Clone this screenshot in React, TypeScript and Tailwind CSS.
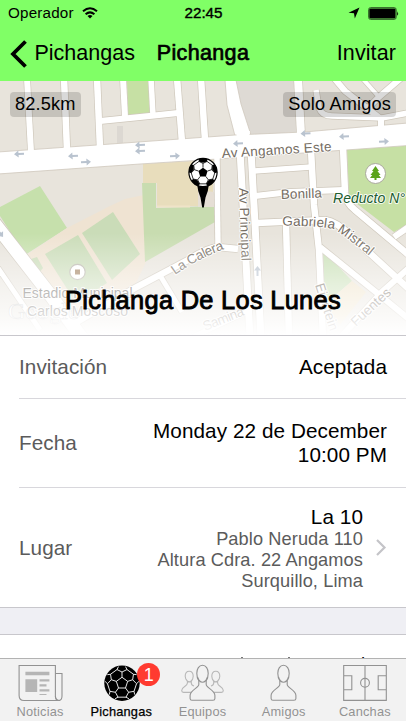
import React from "react";

const point = (r: number, deg: number): [number, number] => {
  const a = (deg * Math.PI) / 180;
  return [r * Math.cos(a), r * Math.sin(a)];
};
const path = (pts: [number, number][], close = false) =>
  pts.map((p, i) => `${i ? "L" : "M"}${p[0].toFixed(2)} ${p[1].toFixed(2)}`).join("") + (close ? "Z" : "");

function ballSeams(r: number, start: number) {
  let seams = "";
  const patches: string[] = [];
  const centre: [number, number][] = [];
  for (let k = 0; k < 5; k++) {
    const t = start + k * 72;
    centre.push(point(r * 0.34, t));
    seams += path([point(r * 0.34, t), point(r * 0.64, t)]);
    seams += path([point(r * 0.97, t - 12), point(r * 0.83, t - 20), point(r * 0.64, t), point(r * 0.83, t + 20), point(r * 0.97, t + 12)]);
    seams += path([point(r * 0.83, t + 20), point(r * 0.83, t + 52)]);
    patches.push(path([point(r, t - 18), point(r * 0.83, t - 20), point(r * 0.68, t), point(r * 0.83, t + 20), point(r, t + 18), point(r * 1.02, t)], true));
  }
  return { seams, patches, centre: path(centre, true) };
}

const tabBall = ballSeams(17.5, -90);
const pinBall = ballSeams(14.2, -90);

const streets: { d: string; w: number }[] = [
  { d: "M27 78L31 152", w: 6 },
  { d: "M64 78L67 150", w: 6.5 },
  { d: "M97 78L100 148", w: 6.5 },
  { d: "M123 78L125 117", w: 6 },
  { d: "M100 121L140 117L178 113", w: 6 },
  { d: "M151 78L153 115", w: 5.5 },
  { d: "M177 78L182 142", w: 6.5 },
  { d: "M201 78L205 140", w: 6.5 },
  { d: "M298 78L301 135", w: 8 },
  { d: "M316 90L319 108Q322 116 332 116L382 118L408 113", w: 5.5 },
  { d: "M334 78L345 91L381 119V132", w: 6 },
  { d: "M401 78L379 97L366 110", w: 6 },
  { d: "M379 97L362 78", w: 4 },
  { d: "M240 150L243 205L250 338", w: 7 },
  { d: "M251 150L254 205L261 338", w: 7 },
  { d: "M254 171L311 167", w: 5.5 },
  { d: "M255 196L290 192L343 190", w: 6 },
  { d: "M257 223L325 220Q337 222 350 235L410 290", w: 6.5 },
  { d: "M311 150L314 205L319 250L323 338", w: 6.5 },
  { d: "M286 222L289 338", w: 6.5 },
  { d: "M343 147L345 193Q346 203 355 210L410 256", w: 6.5 },
  { d: "M394 237L410 226", w: 6 },
  { d: "M320 247L382 297L410 320", w: 6 },
  { d: "M410 267L382 292L340 338", w: 6 },
  { d: "M217 158L218 246", w: 5.5 },
  { d: "M238 249L218 247Q207 248 188 260L135 288L75 323", w: 6.5 },
  { d: "M161 277L182 312", w: 5 },
  { d: "M195 336L248 311", w: 5 },
  { d: "M-4 265L40 330", w: 5 },
  { d: "M-8 220L48 292L82 338", w: 13 },
];

const arrows = [
  [19, 154, 176], [73, 156, 176], [86, 162, -4], [140, 145, 176], [140, 151, 176],
  [175, 156, -4], [238, 143.5, 176], [305.5, 133.5, 176], [344, 136.5, 176], [384, 141.5, -4],
  [257.5, 271, -90], [0, 233, 52],
];

function MapBackdrop() {
  return (
    <svg className="block h-[254px] w-full" viewBox="0 81 406 254" preserveAspectRatio="none" fontFamily="'Liberation Sans', Arial, sans-serif">
      <defs>
        <linearGradient id="fade" x1="0" y1="0" x2="0" y2="1">
          <stop offset="0" stopColor="#fff" stopOpacity="0" />
          <stop offset="0.5" stopColor="#fff" stopOpacity="0.52" />
          <stop offset="0.8" stopColor="#fff" stopOpacity="0.78" />
          <stop offset="1" stopColor="#fff" stopOpacity="1" />
        </linearGradient>
        <path id="mistral" d="M282 225.5Q322 226 333 229Q342 233 378 263" />
        <path id="calera" d="M175 275Q197 259 227 248" />
      </defs>
      <rect y="81" width="406" height="254" fill="#e8e4dc" />
      <path d="M234 81H296L299 132L250 136Z" fill="#dedad4" />
      <path d="M127 81H149L150 113L128 116Z" fill="#c6e0a4" />
      <path d="M117 126H123V143H117Z" fill="#dcd8d2" />
      <path d="M0 207L40 186L67 228L25 255L0 216Z" fill="#c6e0ac" />
      <path d="M25 256L67 228L110 206L125 199L144 195L146 262L135 285L80 318L55 295Z" fill="#efe3d2" />
      <path d="M45 254L78 235L107 283L76 303Z" fill="#cadcb8" />
      <path d="M82 233L113 212L140 254L112 280Z" fill="#cadcb8" />
      <path d="M28 260L37 257L43 268L38 274Z" fill="#cadcb8" />
      <path d="M143 164L213 160V206H157V183H143Z" fill="#e8ddbc" />
      <path d="M142 183H156V208L214 206L215 222L145 262Z" fill="#c8dcb0" />
      <path d="M157 206.5H190" stroke="#efe3c8" strokeWidth="2" />
      <path d="M198 190L214 192V207H198Z" fill="#e5ded5" />
      <path d="M347 149L406 145V225L394 232L356 203L349 195Z" fill="#c6e0a4" />
      <path d="M323 250L352 281L325 304Z" fill="#c9e0b6" />
      <path d="M352 281L366 292L340 325L326 304Z" fill="#efe3c8" />
      <g fill="none" stroke="#cfc8bc">
        {streets.map((s, i) => <path key={i} d={s.d} strokeWidth={s.w + 1.4} />)}
      </g>
      <path d="M225 80L227 105L235 136L251 135L241 104L236 80Z" fill="#fff" stroke="#cfc8bc" strokeWidth="0.8" />
      <path d="M-2 152L97 145L235 135L304 132L408 123V145.5L346 150L218 159L140 164L-2 174Z" fill="#fff" stroke="#cfc8bc" strokeWidth="0.8" />
      <g fill="none" stroke="#fff">
        {streets.map((s, i) => <path key={i} d={s.d} strokeWidth={s.w} />)}
      </g>
      <path d="M236 132L250 131L249 138H237Z" fill="#fff" />
      {arrows.map(([x, y, r], i) => (
        <path key={i} transform={`translate(${x} ${y}) rotate(${r})`} d="M-5 -1H0.5V-3.5L5 0L0.5 3.5V1H-5Z" fill="#b9c3cf" />
      ))}
      <text x="8" y="319" fontSize="24" fontFamily="'Liberation Serif', serif" fill="#fff" stroke="#b5b5b5" strokeWidth="0.6">Google</text>
      <g fill="#756d63" stroke="#fff" strokeOpacity="0.85" strokeWidth="2" strokeLinejoin="round" fontSize="13.5" style={{ paintOrder: "stroke" }}>
        <text transform="translate(222 158) rotate(-3.6)" textLength="110">Av Angamos Este</text>
        <text transform="translate(281 199) rotate(-2)" textLength="41">Bonilla</text>
        <text transform="translate(239 188) rotate(88)" textLength="73">Av Principal</text>
        <text><textPath href="#mistral" textLength="97">Gabriela Mistral</textPath></text>
        <text><textPath href="#calera" textLength="56">La Calera</textPath></text>
        <text transform="translate(205 331) rotate(-22)" textLength="43">Samina</text>
        <text transform="translate(315 285) rotate(72)" textLength="49">Einstein</text>
        <text transform="translate(356 327) rotate(-43)" textLength="49">Fuentes</text>
        <text x="22.5" y="298" textLength="110" fontSize="14" fill="#5f5b57">Estadio Municipal</text>
        <text x="27" y="316" textLength="101" fontSize="14" fill="#5f5b57">Carlos Moscoso</text>
        <text x="333" y="202.5" textLength="72" fontSize="14" fill="#205c30" fontStyle="italic">Reducto N°</text>
      </g>
      <circle cx="375.5" cy="173.5" r="10" fill="#fff" stroke="#aaa89e" strokeWidth="1" />
      <path d="M375.5 166L379 171H377.5L380.5 175H378.7L381 178H376.5V180H374.5V178H370L372.3 175H370.5L373.5 171H372Z" fill="#5ba31b" />
      <circle cx="77.5" cy="272" r="7.7" fill="#fff" stroke="#b8b4ab" strokeWidth="1.2" />
      <rect x="75" y="269.5" width="5" height="5" fill="#a1805f" />
      <rect y="233" width="406" height="102" fill="url(#fade)" />
      <g transform="translate(203 172.5)">
        <path d="M-6 11H6Q5.500 18 2.500 25L0.800 35H-0.800L-2.500 25Q-5.500 18 -6 11Z" fill="#000" />
        <circle r="14.2" fill="#fff" />
        {pinBall.patches.map((d, i) => <path key={i} d={d} fill="#000" />)}
        <path d={pinBall.centre} fill="#000" />
        <path d={pinBall.seams} fill="none" stroke="#000" strokeWidth="0.8" />
        <circle r="14.1" fill="none" stroke="#000" strokeWidth="1.2" />
      </g>
    </svg>
  );
}

function Row({ label, className, children }: { label: string; className: string; children: React.ReactNode }) {
  return (
    <div className={`ml-[19px] flex items-center justify-between text-[20.7px] leading-6 tracking-[0.08px] ${className}`}>
      <span className="text-[#5b5b5b]">{label}</span>
      {children}
    </div>
  );
}

function NewsIcon() {
  return (
    <>
      <path d="M2.100 1.500H38.400V32Q38.400 36.500 43 36.500H7Q2.100 36.500 2.100 31.500Z" />
      <path d="M38.400 9.500H45V32Q45 36.500 41.500 36.500Q38.400 36.500 38.400 32" />
      <g fill="#b5b5b5" stroke="none">
        <path d="M8.400 7.700H32.400V11.300H8.400ZM8.400 15.300H20.200V28H8.400ZM22.500 15.300H32.400V17.600H22.500ZM22.500 20.200H29.500V22.400H22.500ZM22.500 25.300H32.400V27.500H22.500ZM22.500 30H29.500V31H22.500Z" />
      </g>
    </>
  );
}

const person = "M23.500 1.300C27 1.300 29.200 4.800 29.200 9.300C29.200 12.500 28.500 14.800 27.200 16.700V20.500C27.200 24 35.900 25.800 35.900 31.500V34.500Q35.900 36.300 34 36.300H13Q11.100 36.300 11.100 34.500V31.500C11.100 25.800 19.800 24 19.800 20.500V16.700C18.500 14.800 17.800 12.500 17.800 9.300C17.800 4.800 20 1.300 23.500 1.300Z";
const chin = "M18.500 13C19.400 16 21.200 18.200 23.500 18.200C25.800 18.200 27.600 16 28.500 13";

function TeamIcon() {
  const side = "M12.500 28.400H4.500Q2.700 28.400 2.700 26.500C2.700 22.500 8.400 22.500 8.400 19V17.300C7 15.800 6.200 14 6.200 12.300C6.200 9.300 7.800 7.200 10.200 7.200C12.600 7.200 14.200 9.300 14.200 12.300C14.200 14 13.400 15.800 12.300 17.300V19C12.300 20.500 13.500 21.500 15 22";
  const sideChin = "M7 15.200Q10.200 20.500 13.500 15.200";
  return (
    <>
      <g stroke="#b8b8b8">
        <path d={side + sideChin} />
        <path d={side + sideChin} transform="translate(47 0) scale(-1 1)" />
      </g>
      <path d={person} fill="#f2f2f2" />
      <path d={chin} />
    </>
  );
}

function FriendIcon() {
  return <path d={person + chin} />;
}

function FieldIcon() {
  return (
    <>
      <path d="M2.700 1.500H45.300V36.400H2.700ZM24 1.500V36.400M2.700 11.700H10.800V25.700H2.700M45.300 11.700H37.200V25.700H45.300" />
      <circle cx="24" cy="18.800" r="4.400" />
    </>
  );
}

function BallIcon() {
  return (
    <g transform="translate(24 19.2)">
      <circle r="17.7" fill="#000" stroke="none" />
      <path d={tabBall.seams + tabBall.centre} stroke="#fff" strokeWidth="0.9" />
    </g>
  );
}

const tabs = [
  { label: "Noticias", icon: <NewsIcon /> },
  { label: "Pichangas", icon: <BallIcon />, badge: 1 },
  { label: "Equipos", icon: <TeamIcon /> },
  { label: "Amigos", icon: <FriendIcon /> },
  { label: "Canchas", icon: <FieldIcon /> },
];

export default function App() {
  return (
    <div className="flex h-[721px] w-[406px] flex-col overflow-hidden bg-white font-['Liberation_Sans',Arial,sans-serif] text-black">
      <header className="h-[81px] shrink-0 bg-[#80ff66]">
        <div className="grid h-[26px] grid-cols-3 items-center pr-[7px] pl-2 text-[15.2px] leading-none">
          <div className="flex items-center gap-2">
            <span className="tracking-[0.2px]">Operador</span>
            <svg width="16" height="12" viewBox="0 0 16 12" fill="none" stroke="#000" strokeWidth="2">
              <path d="M1 4.300Q8 -1.900 15 4.300M3.600 7.300Q8 3.500 12.400 7.300" />
              <path d="M8 11.500L5.500 9Q8 7 10.500 9Z" fill="#000" stroke="none" />
            </svg>
          </div>
          <span className="text-center [-webkit-text-stroke:0.4px]">22:45</span>
          <div className="flex items-center justify-end gap-2">
            <svg width="12" height="12" viewBox="0 0 12 12"><path d="M11.500 0.500L6.800 11.500L6 6.200L0.500 5.800Z" /></svg>
            <svg width="31" height="13" viewBox="0 0 31 13">
              <rect x="0.600" y="0.600" width="27.600" height="11.800" rx="2" fill="none" stroke="#326528" strokeWidth="1" />
              <rect x="1.300" y="1.500" width="26.200" height="10" rx="1" />
              <path d="M29.200 4.200Q31 6.500 29.200 8.800Z" />
            </svg>
          </div>
        </div>
        <div className="grid h-[55px] grid-cols-[148px_1fr_148px] items-center text-[21.5px]">
          <div className="flex items-center gap-[7px] pl-[9.5px]">
            <svg width="18" height="28" viewBox="0 0 18 28" fill="none" stroke="#000" strokeWidth="3.800"><path d="M15.500 1.500L3 14L15.500 26.500" /></svg>
            <span>Pichangas</span>
          </div>
          <h1 className="text-center tracking-[0.35px] [-webkit-text-stroke:0.7px]">Pichanga</h1>
          <span className="pr-[10px] text-right tracking-[0.1px]">Invitar</span>
        </div>
      </header>

      <section className="relative h-[254px] shrink-0">
        <MapBackdrop />
        <div className="absolute inset-x-[10px] top-[11px] flex justify-between text-[18.200px] leading-[25px]">
          <span className="rounded bg-black/15 px-[5px] tracking-[0.15px]">82.5km</span>
          <span className="rounded bg-black/15 px-[5px] tracking-[0.15px]">Solo Amigos</span>
        </div>
        <h2 className="absolute inset-x-0 top-[203px] text-center text-[25.400px] leading-8 tracking-[0.3px] [-webkit-text-stroke:0.9px]">Pichanga De Los Lunes</h2>
      </section>

      <main className="flex min-h-0 flex-1 flex-col overflow-hidden border-t border-[#c8c7cc]">
        <Row label="Invitación" className="h-[63px] shrink-0 border-b border-[#d8d7dc] pr-[19px]">
          <span>Aceptada</span>
        </Row>
        <Row label="Fecha" className="h-[89px] shrink-0 border-b border-[#d8d7dc] pr-[19px]">
          <span className="text-right">Monday 22 de December<br />10:00 PM</span>
        </Row>
        <Row label="Lugar" className="h-[119px] shrink-0 pr-[19px]">
          <div className="flex items-center gap-3">
            <div className="pt-px text-right">
              <p>La 10</p>
              <p className="text-[18.200px] leading-[21px] tracking-[0.1px] text-[#5b5b5b]">Pablo Neruda 110<br />Altura Cdra. 22 Angamos<br />Surquillo, Lima</p>
            </div>
            <svg width="12" height="17" viewBox="0 0 12 17" fill="none" stroke="#c4c4c8" strokeWidth="2.200"><path d="M2 1L9.500 8.500L2 16" /></svg>
          </div>
        </Row>
        <div className="h-[28px] shrink-0 border-y border-[#c8c7cc] bg-[#efeff4]" />
        <div className="flex h-[23px] shrink-0 items-end justify-end overflow-hidden pr-[19px]">
          <div className="mr-[57px] flex w-[49px] justify-between"><i className="h-px w-0.5 bg-[#777]" /><i className="h-px w-0.5 bg-[#777]" /></div>
          <span className="h-[5px] text-[20.700px] leading-6">9/10</span>
        </div>
      </main>

      <nav className="grid h-[63px] shrink-0 grid-cols-5 border-t border-[#b2b2b2] bg-[#f2f2f2]">
        {tabs.map((tab) => (
          <div key={tab.label} className={`relative flex flex-col items-center pt-[5px] ${tab.badge ? "text-black" : "text-[#929292]"}`}>
            <svg width="48" height="38" viewBox="0 0 48 38" fill="none" stroke="#929292" strokeWidth="1.100">{tab.icon}</svg>
            <span className={`mt-[3px] -translate-x-[0.5px] text-[12.800px] leading-[14px] tracking-[0.2px] ${tab.badge ? "[-webkit-text-stroke:0.25px]" : ""}`}>{tab.label}</span>
            {tab.badge && (
              <span className="absolute top-[4px] left-[56px] flex size-[23px] items-center justify-center rounded-full bg-[#ff3b30] text-[18px] leading-none text-white">{tab.badge}</span>
            )}
          </div>
        ))}
      </nav>
    </div>
  );
}
